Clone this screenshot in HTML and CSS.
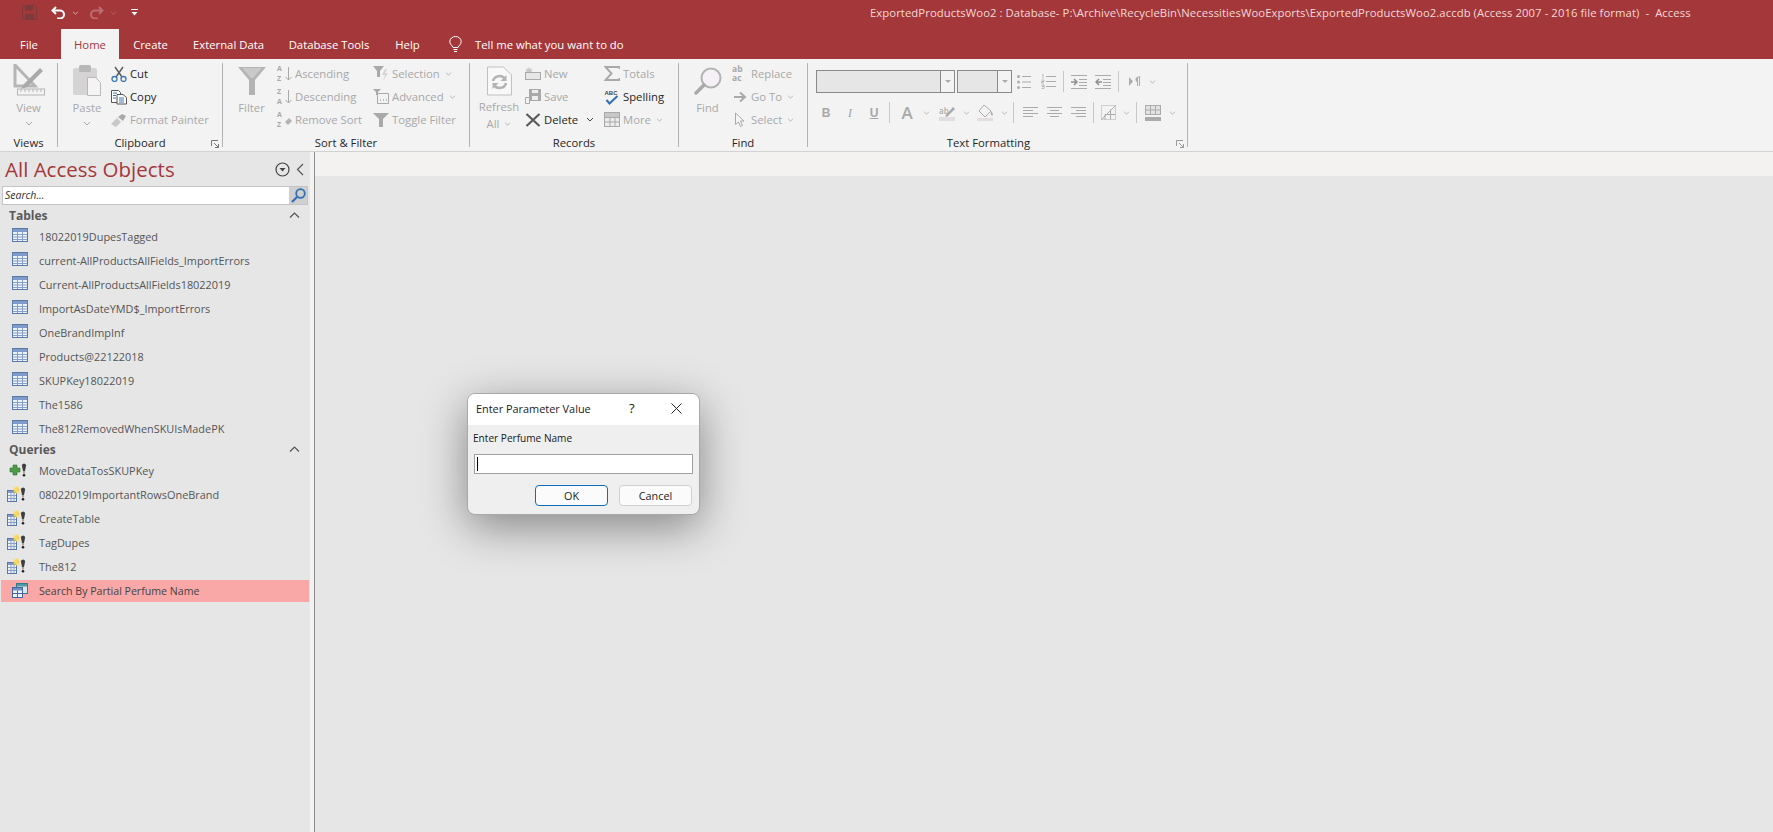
FILE: index.html
```html
<!DOCTYPE html>
<html lang="en">
<head>
<meta charset="utf-8">
<title>Access</title>
<link rel="stylesheet" href="styles.css">
</head>
<body>
<svg class="defs" width="0" height="0" aria-hidden="true">
  <symbol id="chev" viewBox="0 0 8 5"><path d="M1 1l3 3 3-3" fill="none" stroke="currentColor" stroke-width="1"/></symbol>
  <symbol id="table" viewBox="0 0 16 14">
    <rect x=".5" y=".5" width="15" height="13" fill="#eef2f9" stroke="#5878ab"/>
    <rect x="1" y="1" width="14" height="3" fill="#7f9ccb"/>
    <path d="M1 6.500h14M1 9h14M1 11.500h14M5.500 4v9M10.500 4v9" stroke="#86a0c8" fill="none"/>
  </symbol>
  <symbol id="excl" viewBox="0 0 6 14">
    <path d="M.8 2Q3-1 5.200 2L4 8H2z" fill="#3f3f3f"/><rect x="2.300" y="8" width="1.400" height="2.600" fill="#888"/><circle cx="3" cy="12.300" r="1.300" fill="#222"/>
  </symbol>
  <symbol id="qmake" viewBox="0 0 20 16">
    <rect x=".5" y="4.500" width="9" height="11" fill="#eef2f9" stroke="#5878ab"/>
    <rect x="1" y="5" width="8" height="2" fill="#7f9ccb"/>
    <path d="M1 9.500h8M1 12.500h8M4 7v8M7 7v8" stroke="#86a0c8"/>
    <path d="M9.500 0l.9 2 2-.9-.9 2 2 .9-2 .9.900 2-2-.9-.9 2-.9-2-2 .9.900-2-2-.9 2-.9-.9-2 2 .9z" fill="#f7d65a"/>
    <use href="#excl" x="13" y="1" width="6" height="14"/>
  </symbol>
</svg>

<header class="titlebar">
  <div class="qat">
    <svg class="q-save" width="15" height="15" viewBox="0 0 15 15"><path d="M.5.500h12l2 2v12H.5z" fill="none" stroke="#7d3a3d"/><rect x="3" y="1" width="8" height="4.500" fill="#7d3a3d"/><rect x="3" y="9" width="9" height="5.500" fill="#7d3a3d"/></svg>
    <svg class="q-undo" width="15" height="13" viewBox="0 0 15 13"><path d="M5 1L1.500 4.500 5 8M2 4.500h7a4 4 0 0 1 0 8H6" fill="none" stroke="#fff" stroke-width="2"/></svg>
    <svg class="q-ch" width="7" height="4" viewBox="0 0 8 5"><path d="M1 1l3 3 3-3" fill="none" stroke="#e8c8c8"/></svg>
    <svg class="q-redo" width="15" height="13" viewBox="0 0 15 13"><path d="M10 1l3.500 3.500L10 8M13 4.500H6a4 4 0 0 0 0 8h3" fill="none" stroke="#bd6d70" stroke-width="2"/></svg>
    <svg class="q-ch dim" width="7" height="4" viewBox="0 0 8 5"><path d="M1 1l3 3 3-3" fill="none" stroke="#bd6d70"/></svg>
    <svg class="q-more" width="7" height="7" viewBox="0 0 7 7"><path d="M0 .5h7" stroke="#fff"/><path d="M.5 3h6L3.500 6.500z" fill="#fff"/></svg>
  </div>
  <div class="doc-title">ExportedProductsWoo2 : Database- P:\Archive\RecycleBin\NecessitiesWooExports\ExportedProductsWoo2.accdb (Access 2007 - 2016 file format)&nbsp; -&nbsp; Access</div>
</header>

<nav class="tabs">
  <span class="tab t-file">File</span>
  <span class="tab t-home">Home</span>
  <span class="tab t-create">Create</span>
  <span class="tab t-ext">External Data</span>
  <span class="tab t-db">Database Tools</span>
  <span class="tab t-help">Help</span>
  <svg class="bulb" width="13" height="17" viewBox="0 0 13 17"><path d="M4 11.500C3 9 .8 8.500.8 5.500a5.700 5 0 0 1 11.400 0C12.200 8.500 10 9 9 11.500zM4.500 13.500h4M5 15.500h3" fill="none" stroke="#fff"/></svg>
  <span class="tell">Tell me what you want to do</span>
</nav>

<section class="ribbon">
  <div class="group g-views">
    <div class="gbody">
      <div class="big">
        <svg width="32" height="32" viewBox="0 0 32 32"><path d="M2 1v21h20z" fill="none" stroke="#b5b5b5" stroke-width="3"/><path d="M10 21l17-17 3 3-16 16-6 2z" fill="#a9a9a9"/><rect x="4.500" y="25" width="27" height="6" fill="#f3f3f3" stroke="#b5b5b5"/><path d="M8 25v3M12 25v3M16 25v3M20 25v3M24 25v3M28 25v3" stroke="#b5b5b5"/></svg>
        <span class="dis lbl">View</span>
        <svg class="chev dis" width="8" height="5"><use href="#chev"/></svg>
      </div>
    </div>
    <div class="glabel">Views</div>
  </div>

  <div class="group g-clip">
    <div class="gbody">
      <div class="big b-paste">
        <svg width="30" height="32" viewBox="0 0 30 32"><rect x="1" y="4" width="24" height="27" rx="2" fill="#d5d3d4"/><rect x="7" y="1" width="12" height="7" rx="1.500" fill="#b8b8b8"/><path d="M15.500 13.500h8l5 5v13h-13z" fill="#f5f4f5" stroke="#b8b8b8"/></svg>
        <span class="dis lbl">Paste</span>
        <svg class="chev dis" width="8" height="5"><use href="#chev"/></svg>
      </div>
      <div class="col c-clip">
        <div class="row"><svg class="ic" width="16" height="16" viewBox="0 0 16 16"><path d="M4 1l7 10M12 1L5 11" stroke="#5f5f5f" stroke-width="1.500" fill="none"/><circle cx="3.500" cy="13" r="2.500" fill="none" stroke="#3a78b5" stroke-width="1.300"/><circle cx="12.500" cy="13" r="2.500" fill="none" stroke="#3a78b5" stroke-width="1.300"/></svg><span>Cut</span></div>
        <div class="row"><svg class="ic" width="16" height="16" viewBox="0 0 16 16"><path d="M.5 1.500h7l2 2v10H.5z" fill="#fff" stroke="#555"/><path d="M6 5.500h6l3.500 3v6.500H6z" fill="#fff" stroke="#555"/><path d="M2 4h4M2 6.500h3M2 9h3M8 9h5M8 11h5M8 13h5" stroke="#3a78b5"/></svg><span>Copy</span></div>
        <div class="row"><svg class="ic" width="16" height="14" viewBox="0 0 16 14"><path d="M0 11l6-6 4 4-5 5z" fill="#c8c8c8"/><path d="M7 4l4-3 4 2-3 5z" fill="#a9a9a9"/></svg><span class="dis">Format Painter</span></div>
      </div>
    </div>
    <div class="glabel">Clipboard<svg class="launch" width="8" height="8" viewBox="0 0 8 8"><path d="M.5 6V.5H7M3 3l4.500 4.500M4 7.500h3.500V4" fill="none" stroke="#777"/></svg></div>
  </div>

  <div class="group g-sort">
    <div class="gbody">
      <div class="big b-filter">
        <svg width="28" height="28" viewBox="0 0 28 28"><path d="M0 0h28L17 13v15h-6V13z" fill="#b3b3b3"/><path d="M4 1h20l-9 10h-2z" fill="#c9c9c9"/></svg>
        <span class="dis lbl">Filter</span>
      </div>
      <div class="col c-sort1">
        <div class="row"><span class="az ic">A<br>Z</span><svg class="arr" width="7" height="14" viewBox="0 0 7 14"><path d="M3.500 0v13M.5 10l3 3 3-3" fill="none" stroke="#a9a9a9"/></svg><span class="dis">Ascending</span></div>
        <div class="row"><span class="az ic">Z<br>A</span><svg class="arr" width="7" height="14" viewBox="0 0 7 14"><path d="M3.500 0v13M.5 10l3 3 3-3" fill="none" stroke="#a9a9a9"/></svg><span class="dis">Descending</span></div>
        <div class="row"><span class="az ic">A<br>Z</span><svg class="arr" width="7" height="14" viewBox="0 0 7 14"><path d="M0 9l4-4 3 3-4 4z" fill="#b3b3b3"/></svg><span class="dis">Remove Sort</span></div>
      </div>
      <div class="col c-sort2">
        <div class="row"><svg class="ic" width="16" height="15" viewBox="0 0 16 15"><path d="M0 0h11L7 5v6H4V5z" fill="#a9a9a9"/><path d="M12 3l-3 6h3l-2 6 5-8h-3l2-4z" fill="#d5d5d5"/></svg><span class="dis">Selection</span><svg class="chev-i dis" width="7" height="4"><use href="#chev"/></svg></div>
        <div class="row"><svg class="ic" width="16" height="15" viewBox="0 0 16 15"><path d="M0 0h8L5 3v3H3V3z" fill="#a9a9a9"/><path d="M4.500 4.500h11v10h-11z" fill="none" stroke="#a9a9a9"/><path d="M7 11h1M10 11h1M13 11h1" stroke="#888"/></svg><span class="dis">Advanced</span><svg class="chev-i dis" width="7" height="4"><use href="#chev"/></svg></div>
        <div class="row"><svg class="ic" width="16" height="14" viewBox="0 0 16 14"><path d="M0 0h16L10 6v8H6V6z" fill="#a9a9a9"/></svg><span class="dis">Toggle Filter</span></div>
      </div>
    </div>
    <div class="glabel">Sort &amp; Filter</div>
  </div>

  <div class="group g-rec">
    <div class="gbody">
      <div class="big b-refresh">
        <svg width="25" height="30" viewBox="0 0 25 30"><path d="M.5 1h16l8 8v20H.5z" fill="#f8f8f8" stroke="#c0c0c0"/><path d="M6 15a6.500 6 0 0 1 12-2M19 17a6.500 6 0 0 1-12 2" fill="none" stroke="#b3b3b3" stroke-width="2.500"/><path d="M19.500 9v6h-6zM5.500 23v-6h6z" fill="#b3b3b3"/></svg>
        <span class="dis lbl">Refresh</span>
        <span class="dis lbl l2">All<svg class="chev-i" width="7" height="4"><use href="#chev"/></svg></span>
      </div>
      <div class="col c-rec1">
        <div class="row"><svg class="ic" width="16" height="13" viewBox="0 0 16 13"><path d="M4 0l1 2 2-1-1 2 2 1-2 .5 1 2-2-1-1 2-1-2-2 1 1-2-2-.5 2-1-1-2 2 1z" fill="#c8c8c8"/><rect x=".5" y="5.500" width="15" height="7" fill="#e6e6e6" stroke="#a9a9a9"/></svg><span class="dis">New</span></div>
        <div class="row"><svg class="ic" width="16" height="15" viewBox="0 0 16 15"><path d="M.5 8.500h4v6h-4z" fill="none" stroke="#a9a9a9"/><rect x="4" y="0" width="12" height="12" fill="#a9a9a9"/><rect x="7" y="1" width="6" height="3" fill="#eee"/><rect x="7" y="7" width="6" height="4" fill="#eee"/></svg><span class="dis">Save</span></div>
        <div class="row"><svg class="ic" width="15" height="14" viewBox="0 0 15 14"><path d="M1 1l13 12M14 1L1 13" stroke="#5a5a5a" stroke-width="2.200"/></svg><span>Delete</span><svg class="chev-d" width="8" height="5"><use href="#chev"/></svg></div>
      </div>
      <div class="col c-rec2">
        <div class="row"><svg class="ic" width="15" height="15" viewBox="0 0 15 15"><path d="M15 3V1H1l6 6.500L1 14h14v-2" fill="none" stroke="#a9a9a9" stroke-width="2"/></svg><span class="dis">Totals</span></div>
        <div class="row"><svg class="ic" width="15" height="16" viewBox="0 0 15 16"><text x="0" y="6" class="abc">ABC</text><path d="M2 11l3 3.500L13 7" fill="none" stroke="#2f6fb5" stroke-width="2"/></svg><span>Spelling</span></div>
        <div class="row"><svg class="ic" width="16" height="15" viewBox="0 0 16 15"><rect x=".5" y=".5" width="15" height="14" fill="#ececec" stroke="#a9a9a9"/><rect x="1" y="1" width="14" height="4" fill="#c8c8c8"/><path d="M1 5.500h14M1 10h14M6 5v10M11 5v10" stroke="#a9a9a9"/></svg><span class="dis">More</span><svg class="chev-i dis" width="7" height="4"><use href="#chev"/></svg></div>
      </div>
    </div>
    <div class="glabel">Records</div>
  </div>

  <div class="group g-find">
    <div class="gbody">
      <div class="big b-find">
        <svg width="28" height="28" viewBox="0 0 28 28"><circle cx="17" cy="11" r="9.500" fill="#f4f0f5" stroke="#b3b3b3" stroke-width="2"/><path d="M10 18L2 26" stroke="#a9a9a9" stroke-width="3.500" stroke-linecap="round"/></svg>
        <span class="dis lbl">Find</span>
      </div>
      <div class="col c-find">
        <div class="row"><span class="abac ic">ab<br>ac</span><span class="dis">Replace</span></div>
        <div class="row"><svg class="ic" width="16" height="12" viewBox="0 0 16 12"><path d="M2 6h10M8 1.500L13 6l-5 4.500" fill="none" stroke="#a9a9a9" stroke-width="2"/></svg><span class="dis">Go To</span><svg class="chev-i dis" width="7" height="4"><use href="#chev"/></svg></div>
        <div class="row"><svg class="ic" width="16" height="16" viewBox="0 0 16 16"><path d="M3.500 1v11.500l3-2.500 2 4.500 2-1-2-4.500h3.500z" fill="#f4f4f4" stroke="#a9a9a9"/></svg><span class="dis">Select</span><svg class="chev-i dis" width="7" height="4"><use href="#chev"/></svg></div>
      </div>
    </div>
    <div class="glabel">Find</div>
  </div>

  <div class="group g-text">
    <div class="gbody fmt">
      <div class="frow r1">
        <div class="combo c1"><i></i></div>
        <div class="combo c2"><i></i></div>
        <span class="tool w24"><svg width="14" height="14" viewBox="0 0 14 14"><path d="M5 1.500h9M5 7h9M5 12.500h9" stroke="#ababab"/><circle cx="1.500" cy="1.500" r="1.500" fill="#ababab"/><circle cx="1.500" cy="7" r="1.500" fill="#ababab"/><circle cx="1.500" cy="12.500" r="1.500" fill="#ababab"/></svg></span>
        <span class="tool w24"><svg width="15" height="15" viewBox="0 0 15 15"><path d="M5 2.500h10M5 7.500h10M5 12.500h10" stroke="#ababab"/><path d="M1 1l1-.5v4M.5 6h2.500v1.500h-2.500v1.500h2.500M.5 11h2.500v1.500h-2v0h2v2h-2.500" stroke="#ababab" fill="none" stroke-width=".8"/></svg></span>
        <span class="fsep"></span>
        <span class="tool w24"><svg width="16" height="14" viewBox="0 0 16 14"><path d="M0 .5h16M8 4.500h8M8 7.500h8M8 10.500h8M0 13.500h16" stroke="#ababab"/><path d="M0 7h5M3 4l3 3-3 3" stroke="#8f8f8f" stroke-width="1.500" fill="none"/></svg></span>
        <span class="tool w24"><svg width="16" height="14" viewBox="0 0 16 14"><path d="M0 .5h16M8 4.500h8M8 7.500h8M8 10.500h8M0 13.500h16" stroke="#ababab"/><path d="M7 7H2M4 4L1 7l3 3" stroke="#8f8f8f" stroke-width="1.500" fill="none"/></svg></span>
        <span class="fsep wide"></span>
        <span class="tool w20"><svg width="13" height="11" viewBox="0 0 13 11"><path d="M0 1l4 4.500L0 10z" fill="#ababab"/><path d="M8.500 10V1h3M10.500 1v9" stroke="#ababab" fill="none"/><path d="M9 1a2.500 2.500 0 0 0 0 5z" fill="#ababab"/></svg></span>
        <span class="tool w14 cv"><svg width="7" height="4"><use href="#chev"/></svg></span>
      </div>
      <div class="frow r2">
        <span class="tool w24 tb">B</span>
        <span class="tool w24 ti">I</span>
        <span class="tool w24 tu">U</span>
        <span class="fsep wide"></span>
        <span class="tool w22 ta">A</span>
        <span class="tool w16 cv"><svg width="7" height="4"><use href="#chev"/></svg></span>
        <span class="tool w26"><svg width="17" height="16" viewBox="0 0 17 16"><text x="0" y="9" class="ab">ab</text><path d="M6 11l8-9 2 2-8 8z" fill="#ababab"/><rect y="12" width="16" height="4" fill="#e2dde0"/></svg></span>
        <span class="tool w12 cv"><svg width="7" height="4"><use href="#chev"/></svg></span>
        <span class="tool w26"><svg width="17" height="16" viewBox="0 0 17 16"><path d="M7 0l7 6-6 6-6-6z" fill="none" stroke="#ababab"/><path d="M14 6q3 3 1 5-2-2-1-5z" fill="#ababab"/><rect y="13" width="16" height="3" fill="#e2dde0"/></svg></span>
        <span class="tool w12 cv"><svg width="7" height="4"><use href="#chev"/></svg></span>
        <span class="fsep mid"></span>
        <span class="tool w24"><svg width="15" height="11" viewBox="0 0 15 11"><path d="M0 .5h15M0 3.500h10M0 6.500h15M0 9.500h10" stroke="#ababab"/></svg></span>
        <span class="tool w24"><svg width="15" height="11" viewBox="0 0 15 11"><path d="M0 .5h15M3 3.500h9M0 6.500h15M3 9.500h9" stroke="#ababab"/></svg></span>
        <span class="tool w24"><svg width="15" height="11" viewBox="0 0 15 11"><path d="M0 .5h15M5 3.500h10M0 6.500h15M5 9.500h10" stroke="#ababab"/></svg></span>
        <span class="fsep"></span>
        <span class="tool w22"><svg width="15" height="15" viewBox="0 0 15 15"><path d="M.5.500h14v14H.5z" fill="none" stroke="#ababab" stroke-dasharray="1 1"/><path d="M.5 14.500L14.500.500" stroke="#ababab"/><path d="M4 14.500v-5h10.500M9.500 14.500v-10M4 9.500h10" stroke="#ababab" fill="none"/></svg></span>
        <span class="tool w14 cv"><svg width="7" height="4"><use href="#chev"/></svg></span>
        <span class="fsep"></span>
        <span class="tool w26"><svg width="16" height="16" viewBox="0 0 16 16"><rect x=".5" y=".5" width="15" height="9" fill="#e2e2e2" stroke="#ababab"/><path d="M0 5h16M5.500 0v9M10.500 0v9" stroke="#ababab"/><rect y="12" width="16" height="4" fill="#ababab"/></svg></span>
        <span class="tool w12 cv"><svg width="7" height="4"><use href="#chev"/></svg></span>
      </div>
    </div>
    <div class="glabel">Text Formatting<svg class="launch" width="8" height="8" viewBox="0 0 8 8"><path d="M.5 6V.5H7M3 3l4.500 4.500M4 7.500h3.500V4" fill="none" stroke="#999"/></svg></div>
  </div>
</section>

<main class="workspace">
  <aside class="nav">
    <div class="nav-head">
      <h1>All Access Objects</h1>
      <svg class="nav-menu" width="15" height="15" viewBox="0 0 15 15"><circle cx="7.500" cy="7.500" r="6.500" fill="none" stroke="#444" stroke-width="1.200"/><path d="M4.500 6h6l-3 3.500z" fill="#444"/></svg>
      <svg class="nav-close" width="8" height="13" viewBox="0 0 8 13"><path d="M7 1L1.500 6.500 7 12" fill="none" stroke="#555" stroke-width="1.200"/></svg>
    </div>
    <div class="search">
      <span class="s-input">Search...</span>
      <span class="s-btn"><svg width="15" height="15" viewBox="0 0 15 15"><circle cx="9.500" cy="5.500" r="4.300" fill="none" stroke="#2f6fb5" stroke-width="1.800"/><path d="M6 9l-5 5" stroke="#2f6fb5" stroke-width="2.200"/></svg></span>
    </div>
    <div class="sec"><span>Tables</span><svg width="11" height="6" viewBox="0 0 11 6"><path d="M1 5.500l4.500-4.500 4.500 4.500" fill="none" stroke="#555" stroke-width="1.200"/></svg></div>
    <ul class="items">
      <li><svg class="it" width="16" height="14"><use href="#table"/></svg>18022019DupesTagged</li>
      <li><svg class="it" width="16" height="14"><use href="#table"/></svg>current-AllProductsAllFields_ImportErrors</li>
      <li><svg class="it" width="16" height="14"><use href="#table"/></svg>Current-AllProductsAllFields18022019</li>
      <li><svg class="it" width="16" height="14"><use href="#table"/></svg>ImportAsDateYMD$_ImportErrors</li>
      <li><svg class="it" width="16" height="14"><use href="#table"/></svg>OneBrandImpInf</li>
      <li><svg class="it" width="16" height="14"><use href="#table"/></svg>Products@22122018</li>
      <li><svg class="it" width="16" height="14"><use href="#table"/></svg>SKUPKey18022019</li>
      <li><svg class="it" width="16" height="14"><use href="#table"/></svg>The1586</li>
      <li><svg class="it" width="16" height="14"><use href="#table"/></svg>The812RemovedWhenSKUIsMadePK</li>
    </ul>
    <div class="sec s2"><span>Queries</span><svg width="11" height="6" viewBox="0 0 11 6"><path d="M1 5.500l4.500-4.500 4.500 4.500" fill="none" stroke="#555" stroke-width="1.200"/></svg></div>
    <ul class="items">
      <li><svg class="iq ap" width="18" height="14" viewBox="0 0 18 14"><path d="M4 2h4v3h3v4H8v3H4V9H1V5h3z" fill="#4f9a46" stroke="#2c6f2c" stroke-width=".6"/><use href="#excl" x="12" y="0" width="6" height="14"/></svg>MoveDataTosSKUPKey</li>
      <li><svg class="iq" width="20" height="16"><use href="#qmake"/></svg>08022019ImportantRowsOneBrand</li>
      <li><svg class="iq" width="20" height="16"><use href="#qmake"/></svg>CreateTable</li>
      <li><svg class="iq" width="20" height="16"><use href="#qmake"/></svg>TagDupes</li>
      <li><svg class="iq" width="20" height="16"><use href="#qmake"/></svg>The812</li>
      <li class="sel"><svg class="it" width="16" height="15" viewBox="0 0 16 15"><rect x="4.500" y=".5" width="11" height="10" fill="#d9e8ee" stroke="#2f7f8f"/><rect x="5" y="1" width="10" height="2.500" fill="#4f98a8"/><rect x=".5" y="4.500" width="10" height="10" fill="#eef3fa" stroke="#44659c"/><rect x="1" y="5" width="9" height="2.500" fill="#6f8fc0"/><path d="M1 10.500h9M5.500 7.500v7" stroke="#44659c"/></svg>Search By Partial Perfume Name</li>
    </ul>
  </aside>
  <div class="splitter"></div>
  <div class="doc">
    <div class="docbar"></div>
  </div>

  <div class="dialog">
    <div class="d-title">
      <span class="d-name">Enter Parameter Value</span>
      <span class="d-help">?</span>
      <svg class="d-x" width="11" height="11" viewBox="0 0 11 11"><path d="M.5.500l10 10M10.500.500l-10 10" stroke="#222"/></svg>
    </div>
    <div class="d-body">
      <div class="d-label">Enter Perfume Name</div>
      <div class="d-input"><span class="caret"></span></div>
      <div class="d-btns">
        <span class="btn ok">OK</span>
        <span class="btn">Cancel</span>
      </div>
    </div>
  </div>
</main>
</body>
</html>
```

FILE: styles.css
```css
* { box-sizing: border-box; }
html, body { margin: 0; padding: 0; height: 100%; overflow: hidden; }
body {
  width: 1773px; height: 832px;
  display: flex; flex-direction: column;
  font-family: "Open Sans", "Noto Sans", sans-serif;
  font-size: 11.3px;
  color: #262626;
  background: #e6e6e6;
}
.defs { position: absolute; }

.titlebar {
  height: 29px; flex: none;
  background: #a4373a;
  display: flex; align-items: flex-start;
  padding-top: 4px;
}
.qat { display: flex; align-items: center; width: 870px; height: 17px; padding-left: 22px; }
.q-undo { margin-left: 14px; }
.q-ch { margin-left: 6px; }
.q-redo { margin-left: 10px; }
.q-ch.dim { margin-left: 6px; }
.q-more { margin-left: 14px; }
.doc-title { color: #f3d7d8; white-space: nowrap; line-height: 18px; letter-spacing: .07px; }

.tabs {
  height: 30px; flex: none;
  background: #a4373a;
  display: flex; align-items: stretch;
  color: #fff;
  white-space: nowrap;
}
.tab { display: flex; align-items: center; justify-content: center; padding-top: 1px; }
.t-file { width: 58px; margin-right: 3px; }
.t-home { width: 58px; background: #f3f3f3; color: #a4373a; }
.t-create { width: 62px; padding-left: 1px; }
.t-ext { width: 95px; }
.t-db { width: 106px; }
.t-help { width: 51px; }
.bulb { align-self: center; margin-left: 16px; }
.tell { align-self: center; margin-left: 13px; padding-top: 1px; }

.ribbon {
  height: 93px; flex: none;
  background: #f3f3f3;
  border-bottom: 1px solid #d2d2d2;
  display: flex;
  padding-top: 4px;
  white-space: nowrap;
}
.group {
  position: relative;
  height: 84px;
  border-right: 1px solid #b4b4b4;
  display: flex; flex-direction: column;
}
.g-views { width: 58px; }
.g-clip { width: 165px; }
.g-sort { width: 247px; }
.g-rec { width: 209px; }
.g-find { width: 129px; }
.g-text { width: 380px; }
.gbody { height: 68px; flex: none; display: flex; }
.glabel {
  position: relative; flex: none;
  height: 16px; line-height: 16px;
  margin-top: 4px;
  text-align: center;
  color: #262626;
}
.g-text .glabel { padding-right: 18px; }
.launch { position: absolute; right: 3px; top: 5px; }

.dis { color: #a8a8a8; }
.big { width: 57px; display: flex; flex-direction: column; align-items: center; padding-top: 1px; }
.big > svg:first-child { height: 32px; flex: none; }
.lbl { line-height: 16px; margin-top: 4px; }
.l2 { margin-top: 0; display: flex; align-items: center; }
.chev { margin-top: 5px; }
.chev-i { margin-left: 5px; flex: none; }
.chev-d { margin-left: 8px; color: #444; }

.b-paste { width: 58px; }
.b-filter { width: 54px; padding-left: 3px; }
.b-filter > svg:first-child { margin-top: 3px; height: 28px; }
.b-filter .lbl { margin-top: 5px; }
.b-refresh { width: 56px; padding-left: 2px; }
.b-refresh > svg:first-child { height: 30px; margin-top: 2px; }
.b-refresh .lbl { margin-top: 3px; }
.b-refresh .l2 { margin-top: 1px; }
.b-find { width: 53px; padding-left: 4px; }
.b-find > svg:first-child { height: 28px; margin-top: 3px; }
.b-find .lbl { margin-top: 5px; }

.col { display: flex; flex-direction: column; margin-top: -1px; }
.row { height: 23px; display: flex; align-items: center; }
.ic { flex: none; margin-right: 3px; width: 16px; }
.c-clip { margin-left: -5px; width: 111px; }
.c-sort1 { width: 96px; }
.c-sort2 { width: 90px; }
.arr { flex: none; margin: 0 3px 0 -11px; }
.az { font-size: 7px; line-height: 9.500px; color: #a8a8a8; font-weight: 700; text-align: left; }
.abac { font-size: 8.500px; line-height: 8.500px; color: #a8a8a8; font-weight: 700; text-align: left; }
.c-rec1 { width: 78px; margin-left: -1px; }
.c-rec2 { width: 70px; margin-left: 1px; }
.abc { font: 700 6px "Liberation Sans", sans-serif; fill: #444; }
.ab { font: 600 8px "Open Sans", sans-serif; fill: #ababab; }
.c-find { width: 70px; }

.fmt { flex-direction: column; padding: 7px 0 0 8px; }
.frow { display: flex; align-items: center; }
.r1 { height: 23px; }
.r2 { height: 23px; margin: 8px 0 0 -2px; }
.combo {
  height: 23px; background: #e6e6e6; border: 1px solid #8a8a8a;
  position: relative; flex: none;
}
.combo::after {
  content: ""; position: absolute; top: 0; bottom: 0; right: 0; width: 13px;
  background: #f3f3f3; border-left: 1px solid #8a8a8a;
}
.combo i {
  position: absolute; right: 3px; top: 9px; z-index: 1;
  border: 3px solid transparent; border-top: 3px solid #ababab; border-bottom: 0;
  width: 0;
}
.c1 { width: 139px; margin-right: 2px; }
.c2 { width: 55px; margin-right: 0; }
.tool { height: 23px; display: flex; align-items: center; justify-content: center; flex: none; color: #a8a8a8; }
.w12 { width: 12px; } .w14 { width: 14px; } .w16 { width: 16px; } .w20 { width: 20px; } .w22 { width: 22px; } .w24 { width: 24px; } .w26 { width: 26px; }
.fsep { width: 1px; height: 21px; background: #c8c8c8; flex: none; margin: 0 3px; }
.fsep.wide { margin-right: 6px; }
.fsep.mid { margin-right: 4px; }
.tb { font-weight: 700; font-size: 12px; font-family: "Liberation Sans", sans-serif; }
.ti { font-style: italic; font-size: 13px; font-family: "Liberation Serif", serif; }
.tu { font-weight: 700; font-size: 12px; text-decoration: underline; font-family: "Liberation Sans", sans-serif; }
.ta { font-size: 17px; font-weight: 600; }

.workspace { position: relative; flex: 1; display: flex; min-height: 0; }
.nav { width: 310px; flex: none; background: #e6e6e6; }
.nav-head { height: 34px; display: flex; align-items: center; padding-left: 5px; }
.nav-head h1 {
  margin: 0; font-weight: 400; font-size: 20.500px; color: #a4373a; width: 270px;
  white-space: nowrap;
}
.nav-close { margin-left: 6px; }
.search {
  height: 19px; margin: 0 2px; display: flex; width: 306px;
  border: 1px solid #c4c4c4;
}
.s-input { flex: 1; background: #fff; font-style: italic; font-size: 10.500px; line-height: 16px; padding-left: 2px; color: #333; }
.s-btn { width: 18px; background: #cfcfcf; display: flex; align-items: center; justify-content: center; }
.sec {
  height: 18px; margin-top: 1px; display: flex; align-items: center; justify-content: space-between;
  padding: 0 10px 0 9px; font-weight: 700; font-size: 12px; color: #595959;
}
.s2 { height: 18px; margin-top: 0; }
.items { list-style: none; margin: 0; padding: 0; font-size: 10.900px; }
.items li {
  height: 24px; display: flex; align-items: center; position: relative;
  padding-left: 39px; color: #555;
  white-space: nowrap;
}
.it { position: absolute; left: 12px; top: 4px; }
.iq { position: absolute; left: 7px; top: 4px; }
.ap { left: 9px; top: 5px; }
.items .sel { background: #faa7a7; margin-left: 1px; width: 308px; padding-left: 38px; height: 22px; margin-top: 2px; color: #444; font-size: 10.600px; }
.items .sel .it { left: 11px; top: 3px; }

.splitter { width: 5px; flex: none; background: #f3f3f3; border-right: 1px solid #8c8c8c; }
.doc { flex: 1; background: #e6e6e6; }
.docbar { height: 24px; background: #f3f2f1; }

.dialog {
  position: absolute; left: 467px; top: 241px; width: 233px; height: 122px;
  background: #efefef; border: 1px solid #a8a8a8; border-radius: 8px;
  box-shadow: 0 12px 45px rgba(0,0,0,.42);
  overflow: hidden;
  color: #1a1a1a;
}
.d-title { height: 31px; padding: 0 0 3px 8px; background: #fff; display: flex; align-items: center; position: relative; }
.d-name { width: 153px; font-size: 10.900px; }
.d-help { font-size: 13px; width: 42px; }
.d-body { padding: 5px 5px 0 5px; }
.d-label { line-height: 16px; font-size: 10.100px; }
.d-input { height: 20px; width: 219px; margin: 8px 0 0 1px; background: #fff; border: 1px solid #a0a0a0; display: flex; align-items: center; padding-left: 2px; }
.caret { width: 1px; height: 14px; background: #000; }
.d-btns { display: flex; justify-content: flex-end; gap: 11px; margin-top: 11px; padding-right: 2px; }
.btn {
  width: 73px; height: 21px; background: #fbfbfb; border: 1px solid #d0d0d0; border-radius: 4px;
  display: flex; align-items: center; justify-content: center; font-size: 10.800px;
}
.ok { border: 1px solid #0f6cbd; }
```
